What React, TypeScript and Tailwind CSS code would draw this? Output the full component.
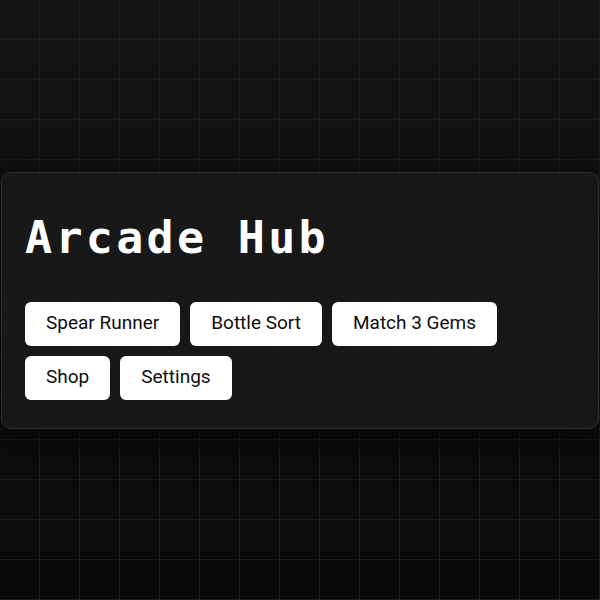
import React from "react";

const games = ["Spear Runner", "Bottle Sort", "Match 3 Gems", "Shop", "Settings"];

export default function App() {
  return (
    <div className="relative h-[600px] w-[600px] overflow-hidden bg-gradient-to-b from-[#141414] to-[#0a0a0a]">
      {/* faint 40px grid */}
      <div className="pointer-events-none absolute inset-0 bg-[linear-gradient(to_right,#1d1d1d_1px,transparent_1px),linear-gradient(to_bottom,#1d1d1d_1px,transparent_1px)] bg-[size:40px_40px] bg-[position:-1px_-1px]" />
      <div className="relative flex h-full items-center justify-center px-px">
        <div className="w-full rounded-[10px] border border-[#2e2e2e] bg-[#191919]/90 pb-7 pl-[23px] pr-6 pt-6 shadow-[0_10px_40px_rgba(0,0,0,0.6)]">
          <h1 className="font-['DejaVu_Sans_Mono',monospace] text-[45px] font-bold leading-[82px] tracking-[3.3px] text-white">
            Arcade Hub
          </h1>
          <div className="mt-[23px] flex flex-wrap gap-[10px]">
            {games.map((g) => (
              <button
                key={g}
                className="h-[44px] rounded-[6px] bg-white px-[21px] font-['Roboto',sans-serif] text-[19px] text-[#0d0d0d]"
              >
                {g}
              </button>
            ))}
          </div>
        </div>
      </div>
    </div>
  );
}
